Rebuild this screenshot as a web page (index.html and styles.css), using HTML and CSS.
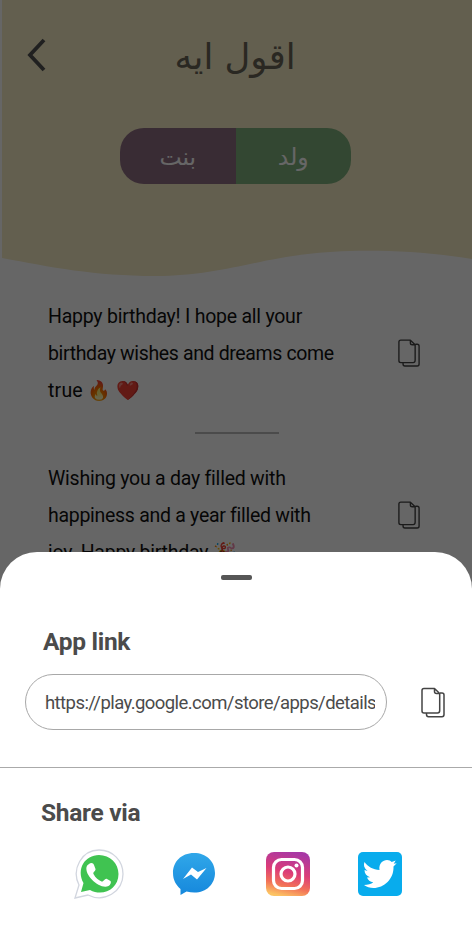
FILE: index.html
```html
<!DOCTYPE html>
<html lang="en">
<head>
<meta charset="utf-8">
<title>Share</title>
<link rel="stylesheet" href="styles.css">
</head>
<body>
<svg width="0" height="0" class="defs">
  <symbol id="copy" viewBox="0 0 24 30">
    <path d="M3 1H13.500L18.700 6V23Q18.700 25.500 16.500 25.500H3Q1 25.500 1 23.500V3Q1 1 3 1ZM13.500 1V4Q13.500 6 15.500 6H18.500M19 5.500H21Q23 5.500 23 7.500V27Q23 29.200 21 29.200H7.500Q5.500 29.200 5.500 27V25.500" fill="none" stroke="currentColor" stroke-width="1.500" stroke-linejoin="round"/>
  </symbol>
</svg>
<div class="screen">
  <div class="page">
    <header class="hero">
      <svg class="wave" viewBox="0 0 472 290"><path d="M2 0H472V259C435 253 395 250 350 251C265 253 230 276 155 276C95 276 50 267 2 258Z" fill="#f7edc6"/></svg>
      <div class="bar">
        <svg class="back" viewBox="0 0 20 34"><path d="M18 2L4 17L18 32" fill="none" stroke="#505050" stroke-width="3.800"/></svg>
        <h1 class="title" dir="rtl">اقول ايه</h1>
      </div>
      <div class="toggle"><span class="girl">بنت</span><span class="boy">ولد</span></div>
    </header>
    <section class="wish">
      <p><span class="l1">Happy birthday! I hope all your</span><br><span class="l2">birthday wishes and dreams come</span><br><span class="l3">true</span> <span class="emoji fire">🔥</span> <span class="emoji">❤️</span></p>
      <svg class="copy"><use href="#copy"/></svg>
    </section>
    <hr class="rule">
    <section class="wish">
      <p><span class="l4">Wishing you a day filled with</span><br><span class="l5">happiness and a year filled with</span><br><span class="l6">joy. Happy birthday</span> <span class="emoji party">🎉</span></p>
      <svg class="copy"><use href="#copy"/></svg>
    </section>
  </div>
  <div class="scrim"></div>
  <div class="sheet">
    <div class="handle"></div>
    <h2 class="app-title">App link</h2>
    <div class="link-row">
      <div class="field"><div class="url">https://play.google.com/store/apps/details</div></div>
      <svg class="copy big"><use href="#copy"/></svg>
    </div>
    <div class="divider"></div>
    <h2 class="share-title">Share via</h2>
    <div class="apps">
      <svg width="50" height="50" viewBox="0 0 50 50"><path d="M1 49L5 36C-3 20 8 1 25 1C39 1 49 12 49 25C49 43 30 54 14 46Z" fill="#fff" stroke="#d2d6df" stroke-width="1.300"/><path d="M7 43L9.500 34C2 20 11 6 25 6C36 6 44.500 14.500 44.500 25C44.500 40 29 48 16 41Z" fill="#40c351"/><path d="M15 15C17 13 19.500 14 20 16L21.500 20C22 22 18.500 23 19.500 25C21.500 29 24.500 31 27.500 32.500C29.500 33.500 30.500 29 33 30L36.500 32C37.500 33 36.500 36 34.500 37C26.500 41 10.500 27 12.500 18Q13 16 15 15Z" fill="#fff"/></svg>
      <svg width="44" height="44" viewBox="0 0 44 44"><defs><linearGradient id="m" x2="0" y2="1"><stop stop-color="#30a7e9"/><stop offset="1" stop-color="#1688dc"/></linearGradient></defs><path d="M22 1C9 1 1 10 1 21C1 28 4 33 8.500 37V43L14.500 39.500C31 44 43 34 43 21C43 9 34 1 22 1Z" fill="url(#m)"/><path d="M11 27L20 15.500L26 20L34.500 16L25 27.500L19 22.500Z" fill="#fff"/></svg>
      <svg width="44" height="44" viewBox="0 0 44 44"><defs><linearGradient id="i" x1=".6" y1="0" x2=".35" y2="1"><stop stop-color="#a738a5"/><stop offset=".45" stop-color="#dc3c78"/><stop offset=".75" stop-color="#f27158"/><stop offset="1" stop-color="#fcc363"/></linearGradient></defs><rect width="44" height="44" rx="8" fill="url(#i)"/><g fill="none" stroke="#fff" stroke-width="3.200"><rect x="7.500" y="7.500" width="29" height="29" rx="8"/><circle cx="22" cy="22" r="7"/></g><circle cx="30.500" cy="13.500" r="2" fill="#fff"/></svg>
      <svg width="44" height="44" viewBox="0 0 44 44"><rect width="44" height="44" rx="5" fill="#08aced"/><path d="M6.500 10C10 15 15 17.500 21.500 18C20.500 11.500 25 8 29 8C31 8 32.700 8.900 33.700 10L37.700 8.500L35.700 11.800L38.700 11.200L35.500 14.500C36 27 26 36 15.500 36C12 36 8.500 35 6 33C10 33 13 32 15.300 30.300C12 30 10 28 9 25.400L12 25.300C8.500 24 6.500 21.500 6.500 18L9.500 18.900C6 16 5.200 13 6.500 10Z" fill="#fff"/></svg>
    </div>
  </div>
</div>
</body>
</html>
```
FILE: styles.css
```css
* { box-sizing: border-box; }
body { margin: 0; font-family: Roboto, "Noto Sans", sans-serif; }
h1, h2, p { margin: 0; }
.defs { position: absolute; }
.screen { position: relative; width: 472px; height: 927px; overflow: hidden; background: #fff; }
.hero { position: relative; height: 296px; }
.wave { position: absolute; left: 0; top: 0; width: 472px; height: 290px; }
.bar { position: relative; height: 128px; display: flex; padding: 38px 0 0 26px; }
.back { width: 20px; height: 34px; flex: none; }
.title { width: 378px; text-align: center; font: 400 35.500px/38px "DejaVu Sans", sans-serif; color: #6a6456; }
.toggle { position: relative; margin-left: 120px; width: 231px; height: 56px; border-radius: 24px; overflow: hidden; display: flex; color: #fff; font: 23.500px/59px "DejaVu Sans", sans-serif; text-align: center; }
.toggle span { flex: 1; }
.girl { background: #8f6e83; }
.boy { background: #7fb17d; }
.wish { display: flex; align-items: center; height: 114px; padding: 0 52px 0 48px; justify-content: space-between; }
.wish p { font-size: 19.500px; line-height: 37.300px; white-space: nowrap; color: #111; padding-top: 1px; }
.l1, .l4 { letter-spacing: -.24px; }
.l2 { letter-spacing: -.37px; }
.l5 { letter-spacing: -.29px; }
.l6 { letter-spacing: -.24px; }
.l3 { letter-spacing: .2px; }
.copy { width: 22px; height: 28px; color: #444; flex: none; }
.rule { width: 84px; height: 2px; border: 0; margin: 22px 0 24px 195px; background: #bbb; }
.emoji { font-family: "Noto Color Emoji", sans-serif; font-size: 19px; }
.scrim { position: absolute; inset: 0; background: rgba(0,0,0,.6); }
.sheet { position: absolute; left: 0; right: 0; top: 552px; bottom: 0; background: #fff; border-radius: 37px 37px 0 0; color: #4b4b4b; }
.handle { width: 31px; height: 5px; border-radius: 2px; background: #565656; margin: 23px 0 0 221px; }
.sheet h2 { font-size: 24.500px; line-height: 30px; font-weight: 700; white-space: nowrap; letter-spacing: -.3px; }
.app-title { margin: 47px 0 0 43px; }
.link-row { display: flex; align-items: center; margin: 17px 0 0 25px; gap: 34px; }
.field { width: 362px; height: 56px; border: 1px solid #a8a8a8; border-radius: 28px; padding: 0 11px 0 19px; }
.url { overflow: hidden; white-space: nowrap; font-size: 18.500px; line-height: 56px; letter-spacing: -.57px; height: 54px; }
.big { width: 24px; height: 31px; }
.divider { height: 1px; background: #aaa; margin-top: 37px; }
.share-title { margin: 30px 0 0 41px; }
.apps { display: flex; align-items: center; padding-left: 74px; margin-top: 21px; }
.apps svg { margin-right: 48px; }
.apps svg:nth-child(2) { margin-right: 50px; }
```
